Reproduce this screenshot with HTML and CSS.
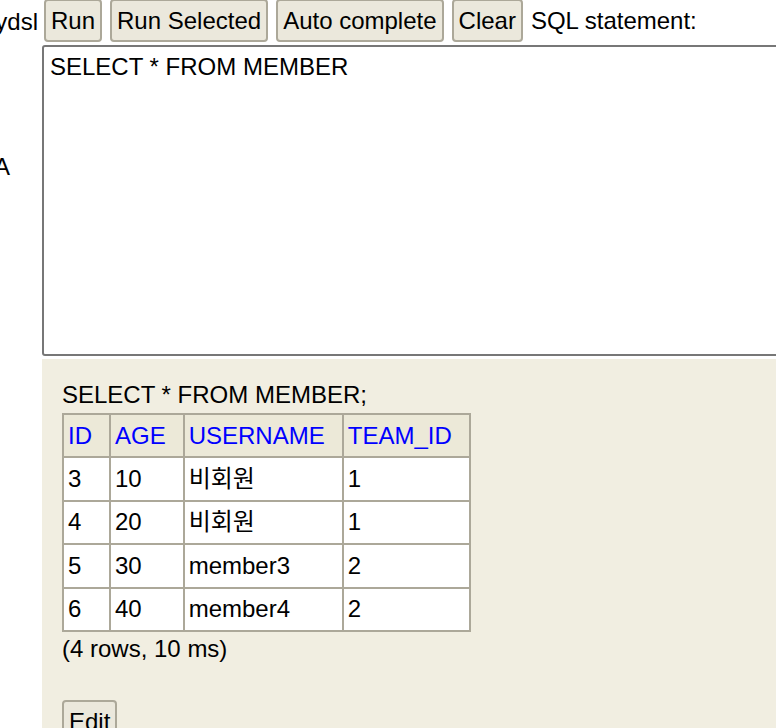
FILE: index.html
```html
<!DOCTYPE html>
<html>
<head>
<meta charset="utf-8">
<link rel="stylesheet" href="styles.css">
</head>
<body>
<div class="frames">
  <div class="tree">
    <div class="tree-line first"><span>jdbc:h2:tcp://localhost/~/querydsl</span></div>
    <div class="tree-line second"><span>INFORMATION_SCHEMA</span></div>
  </div>
  <div class="main">
    <div class="toolbar">
      <button class="btn">Run</button>
      <button class="btn">Run Selected</button>
      <button class="btn">Auto complete</button>
      <button class="btn">Clear</button>
      <span class="label">SQL statement:</span>
    </div>
    <div class="editor">SELECT * FROM MEMBER</div>
    <div class="result">
      <div class="query">SELECT * FROM MEMBER;</div>
      <table class="grid">
        <tr><th><a>ID</a></th><th><a>AGE</a></th><th><a>USERNAME</a></th><th><a>TEAM_ID</a></th></tr>
        <tr><td>3</td><td>10</td><td>비회원</td><td>1</td></tr>
        <tr><td>4</td><td>20</td><td>비회원</td><td>1</td></tr>
        <tr><td>5</td><td>30</td><td>member3</td><td>2</td></tr>
        <tr><td>6</td><td>40</td><td>member4</td><td>2</td></tr>
      </table>
      <div class="stats">(4 rows, 10 ms)</div>
      <button class="btn edit">Edit</button>
    </div>
  </div>
</div>
</body>
</html>
```
FILE: styles.css
```css
html, body {
  margin: 0;
  padding: 0;
  background: #ffffff;
  overflow: hidden;
  width: 776px;
  height: 728px;
}
body {
  font-family: "Liberation Sans", Arial, "Noto Sans CJK KR", sans-serif;
  font-size: 24px;
  line-height: 28px;
  color: #000;
}
.frames {
  display: flex;
  align-items: flex-start;
  height: 728px;
}
.tree {
  width: 42px;
  flex: none;
  overflow: hidden;
  padding-top: 8px;
}
.tree-line {
  display: flex;
  justify-content: flex-end;
  white-space: nowrap;
  overflow: hidden;
}
.tree-line.first { padding-right: 4px; }
.tree-line.second { margin-top: 117px; padding-right: 32px; }
.main {
  flex: none;
  width: 800px;
}
.toolbar {
  display: flex;
  align-items: center;
  gap: 8px;
  padding-left: 2px;
  margin-top: -1px;
}
.btn {
  font-family: "Liberation Sans", Arial, sans-serif;
  font-size: 24px;
  line-height: 28px;
  color: #000;
  background: #ebe8dc;
  border: 2px solid #aca899;
  border-radius: 4px;
  padding: 6px 5px 5px;
  margin: 0;
}
.label {
  margin-left: 0;
}
.editor {
  margin-top: 3px;
  height: 296px;
  border: 2px solid #777777;
  border-radius: 3px;
  padding: 6px 6px 5px;
  width: 780px;
  white-space: pre;
}
.result {
  margin-top: 3px;
  background: #f1eee1;
  padding: 22px 0 0 20px;
  height: 400px;
}
.query {
  margin-bottom: 4px;
}
.grid {
  border-collapse: collapse;
  border: 2px solid #aca899;
  background: #ffffff;
}
.grid th, .grid td {
  border: 2px solid #aca899;
  padding: 6.7px 17px 6.7px 4px;
  text-align: left;
  font-weight: normal;
  white-space: nowrap;
}
.grid th {
  background: #ece9d8;
}
.grid th a {
  color: #0000ff;
  text-decoration: none;
}
.stats {
  margin-top: 3px;
}
.edit {
  margin-top: 37px;
}
```
